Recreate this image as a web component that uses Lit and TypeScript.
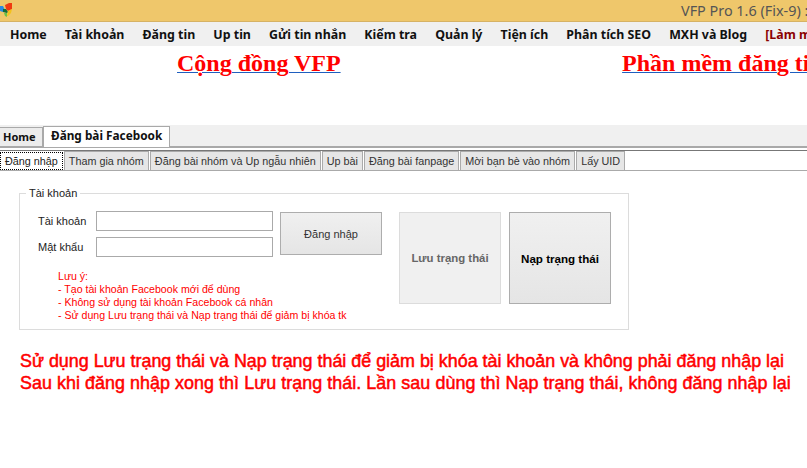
import { LitElement, html, css } from 'lit';
import { customElement } from 'lit/decorators.js';

const MENU = ['Home', 'Tài khoản', 'Đăng tin', 'Up tin', 'Gửi tin nhắn', 'Kiểm tra', 'Quản lý', 'Tiện ích', 'Phân tích SEO', 'MXH và Blog'];
const SUB_TABS = ['Đăng nhập', 'Tham gia nhóm', 'Đăng bài nhóm và Up ngẫu nhiên', 'Up bài', 'Đăng bài fanpage', 'Mời bạn bè vào nhóm', 'Lấy UID'];

@customElement('app-root')
export class AppRoot extends LitElement {
  static styles = css`
    :host {
      display: block;
      width: 807px;
      height: 468px;
      overflow: hidden;
      background: #fff;
      font-family: 'Noto Sans', 'Open Sans', sans-serif;
      color: #111;
    }
    .title {
      height: 21px;
      background: #efc76b;
      border-bottom: 1px solid #d6b264;
      display: flex;
      align-items: center;
      padding-left: 681px;
      font-size: 14.4px;
      color: #555;
      white-space: nowrap;
      overflow: hidden;
      position: relative;
    }
    .logo {
      position: absolute;
      left: 0;
      top: 2px;
    }
    .menu {
      height: 24px;
      background: #f0f0f0;
      display: flex;
      align-items: center;
      gap: 18.1px;
      padding-left: 10px;
      font-size: 12.4px;
      font-weight: 700;
      white-space: nowrap;
      overflow: hidden;
    }
    .menu .hot {
      color: #8b0000;
    }
    .heads {
      height: 79px;
      display: flex;
      padding-left: 177px;
      gap: 281.5px;
      white-space: nowrap;
      overflow: hidden;
    }
    .heads span {
      font-family: 'Liberation Serif', serif;
      font-size: 24px;
      font-weight: 700;
      color: #f00;
      line-height: 34px;
      text-decoration: underline;
      text-decoration-color: #1f5fbf;
      text-decoration-thickness: 1px;
    }
    .tabs {
      height: 21px;
      background: #f0f0f0;
      display: flex;
      align-items: flex-end;
      font-size: 11.8px;
      font-weight: 700;
      border-bottom: 2px solid #a9a9a9;
    }
    .tabs div {
      box-sizing: border-box;
    }
    .tabs .home {
      width: 43px;
      height: 19px;
      padding-left: 3px;
      line-height: 18px;
      font-size: 11px;
      border: 1px solid #a9a9a9;
      border-width: 1px 1px 0 0;
      background: #ececec;
    }
    .tabs .on {
      width: 127px;
      height: 21px;
      margin-bottom: -1px;
      padding-left: 7px;
      line-height: 17px;
      background: #fff;
      border: 1px solid #a9a9a9;
      border-bottom: 0;
    }
    .subs {
      margin-top: 2px;
      height: 21px;
      box-sizing: border-box;
      display: flex;
      align-items: flex-end;
      border-top: 1px solid #777;
      border-bottom: 1px solid #aaa;
      font-family: 'Liberation Sans', sans-serif;
      font-size: 10.8px;
      white-space: nowrap;
    }
    .subs div {
      height: 19px;
      box-sizing: border-box;
      line-height: 18px;
      padding: 0 4px;
      margin-right: 1px;
      background: #e6e6e6;
      border: 1px solid #aaa;
      border-bottom: 0;
      color: #333;
    }
    .subs .sel {
      background: #fff;
      border: 1px dotted #000;
      height: 18px;
      line-height: 16px;
      color: #222;
    }
    .group {
      box-sizing: border-box;
      width: 610px;
      height: 137px;
      margin: 22px 0 0 19px;
      border: 1px solid #dcdcdc;
      position: relative;
      display: flex;
      padding: 17px 0 0 18px;
      font-family: 'Liberation Sans', sans-serif;
      font-size: 11px;
    }
    .group .legend {
      position: absolute;
      left: 6px;
      top: -7px;
      padding: 0 3px;
      background: #fff;
      color: #222;
    }
    .fields {
      display: grid;
      grid-template-columns: 58px 177px;
      grid-auto-rows: 20px;
      row-gap: 6px;
      align-items: center;
      color: #222;
    }
    .fields i {
      display: block;
      height: 20px;
      box-sizing: border-box;
      border: 1px solid #aaa;
      background: #fff;
    }
    .btn {
      box-sizing: border-box;
      margin-top: 1px;
      display: flex;
      align-items: center;
      justify-content: center;
      border: 1px solid #adadad;
      background: linear-gradient(#f0f0f0, #e5e5e5);
      color: #333;
    }
    .login {
      width: 102px;
      height: 43px;
      margin-left: 7px;
    }
    .save {
      width: 102px;
      height: 92px;
      margin-left: 17px;
      background: #f0f0f0;
      border-color: #dcdcdc;
      color: #666;
      font-size: 11.4px;
      font-weight: 700;
    }
    .load {
      width: 102px;
      height: 92px;
      margin-left: 8px;
      color: #000;
      font-size: 11.6px;
      font-weight: 700;
    }
    .note {
      position: absolute;
      left: 38px;
      top: 76px;
      color: #f00;
      font-size: 10.6px;
      line-height: 13px;
      white-space: nowrap;
    }
    .warn {
      margin: 21px 0 0 20px;
      font-family: 'Liberation Sans', sans-serif;
      font-size: 17.9px;
      -webkit-text-stroke: 0.5px #f00;
      line-height: 21.5px;
      color: #f00;
      white-space: nowrap;
    }
    .warn .second {
      letter-spacing: 0.05px;
    }
  `;

  render() {
    return html`
      <div class="title">
        <svg class="logo" width="13" height="16" viewBox="0 0 13 16">
          <path d="M5 3 L9 1 L12 1 L12 7 L8 9 L6 7Z" fill="#f03a10" />
          <path d="M0 4 L3 4 L5 8 L3 10 L0 9Z" fill="#2a8ae0" />
          <path d="M3 7 L6 7 L8 10 L7 11 L3 10Z" fill="#136c3a" />
          <path d="M4 11 L7 11 L7 15 L5 14Z" fill="#6cc04a" />
          <path d="M8 9 L12 7 L11 11 L8 14 L7 14Z" fill="#f2c21c" />
        </svg>
        VFP Pro 1.6 (Fix-9) :
      </div>
      <div class="menu">
        ${MENU.map((m) => html`<span>${m}</span>`)}
        <span class="hot">[Làm mới]</span>
      </div>
      <div class="heads">
        <span>Cộng đồng VFP</span>
        <span>Phần mềm đăng tin</span>
      </div>
      <div class="tabs">
        <div class="home">Home</div>
        <div class="on">Đăng bài Facebook</div>
      </div>
      <div class="subs">
        ${SUB_TABS.map((t, i) => html`<div class=${i === 0 ? 'sel' : ''}>${t}</div>`)}
      </div>
      <div class="group">
        <span class="legend">Tài khoản</span>
        <div class="fields">
          <span>Tài khoản</span><i></i>
          <span>Mật khẩu</span><i></i>
        </div>
        <div class="btn login">Đăng nhập</div>
        <div class="btn save">Lưu trạng thái</div>
        <div class="btn load">Nạp trạng thái</div>
        <div class="note">
          Lưu ý:<br />
          - Tạo tài khoản Facebook mới để dùng<br />
          - Không sử dụng tài khoản Facebook cá nhân<br />
          - Sử dụng Lưu trạng thái và Nạp trạng thái để giảm bị khóa tk
        </div>
      </div>
      <div class="warn">
        Sử dụng Lưu trạng thái và Nạp trạng thái để giảm bị khóa tài khoản và không phải đăng nhập lại<br />
        <span class="second">Sau khi đăng nhập xong thì Lưu trạng thái. Lần sau dùng thì Nạp trạng thái, không đăng nhập lại</span>
      </div>
    `;
  }
}

declare global {
  interface HTMLElementTagNameMap {
    'app-root': AppRoot;
  }
}
